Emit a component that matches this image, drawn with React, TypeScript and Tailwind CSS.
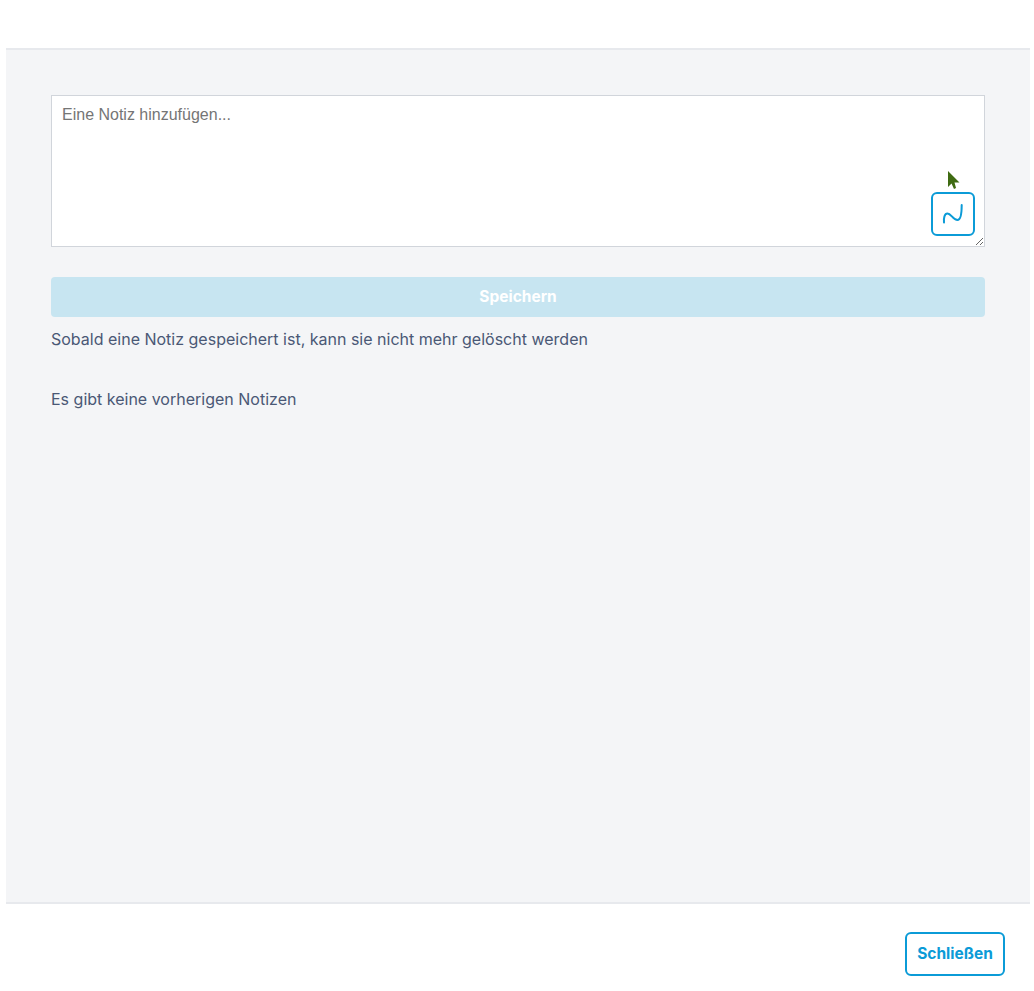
export default function App() {
  return (
    <div className="h-[991px] bg-white pl-[6px] pr-[4px] flex flex-col font-['Inter',sans-serif]">
      <header className="h-[48px] shrink-0 bg-white" />
      <main className="flex-1 bg-[#f4f5f7] border-y-2 border-[#e7e9ed] px-[45px] pt-[45px]">
        <div className="relative h-[152px]">
          <textarea
            placeholder="Eine Notiz hinzufügen..."
            className="block w-full h-[152px] bg-white border border-[#d1d5db] px-[10px] py-[9px] text-[16px] leading-[20px] font-['Liberation_Sans',sans-serif] outline-none resize-y placeholder:text-[#757575]"
          />
          <svg className="absolute left-[896px] top-[75px]" width="14" height="20" viewBox="0 0 14 20">
            <path d="M1 1 L1 17 L4.5 13.5 L7 19 L9 18 L7.5 12.5 L12.5 12.5 Z" fill="#3f6b12" />
          </svg>
          <button className="absolute left-[880px] top-[97px] w-[44px] h-[44px] rounded-[6px] border-2 border-[#0b9bd7] bg-white flex items-center justify-center">
            <svg width="22" height="22" viewBox="0 0 22 22" fill="none">
              <path
                d="M2 19.5 C1.5 15 2.5 10.5 5.5 10.5 C9 10.5 11 17 15.5 17 C19 17 19.7 10 19.7 2"
                stroke="#0b9bd7"
                strokeWidth="2"
                strokeLinecap="round"
              />
            </svg>
          </button>
        </div>
        <button className="mt-[30px] block w-full h-[40px] rounded-[4px] bg-[#c7e5f1] text-white text-[15.5px] font-bold">
          Speichern
        </button>
        <p className="mt-[10px] text-[16px] leading-[24px] text-[#4a5875]">
          Sobald eine Notiz gespeichert ist, kann sie nicht mehr gelöscht werden
        </p>
        <p className="mt-[36px] text-[16px] leading-[24px] text-[#4a5875]">Es gibt keine vorherigen Notizen</p>
      </main>
      <footer className="h-[87px] shrink-0 bg-white flex justify-end items-start pt-[28px] pr-[25px]">
        <button className="w-[100px] h-[44px] rounded-[6px] border-2 border-[#0b9bd7] bg-white text-[#0b9bd7] text-[15.5px] font-bold">
          Schließen
        </button>
      </footer>
    </div>
  );
}
